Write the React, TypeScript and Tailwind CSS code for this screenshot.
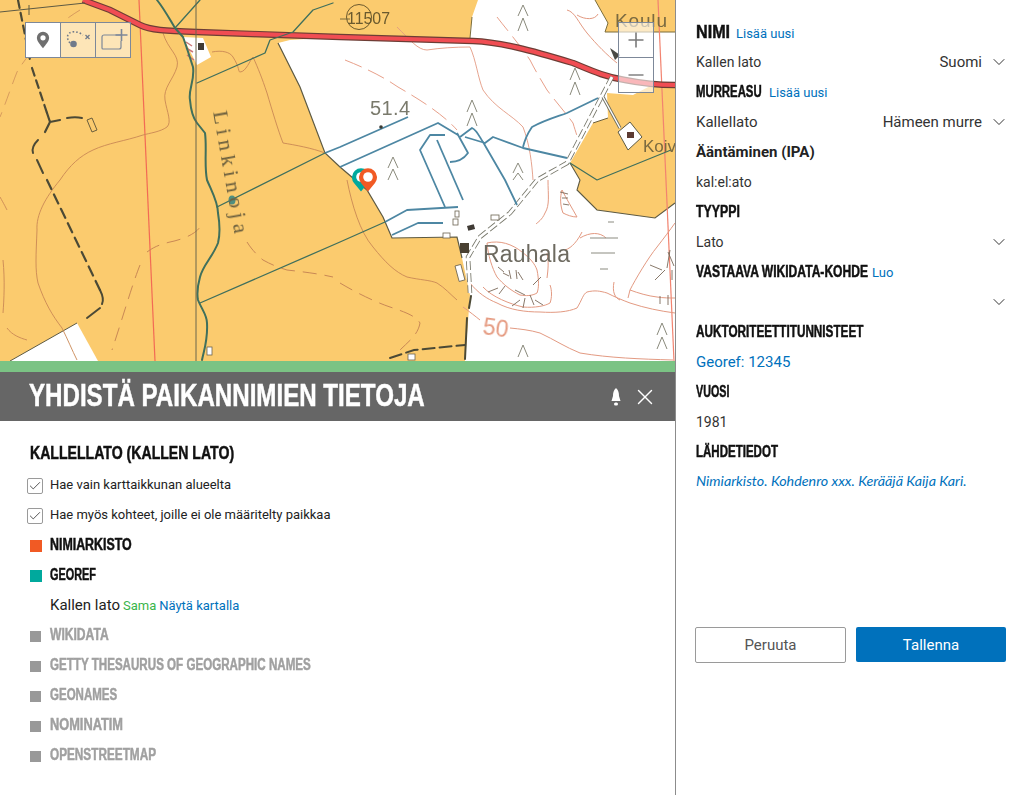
import React from 'react';
import { ChevronDown, X, Check } from 'lucide-react';

const pins = ['#00a99d', '#f15a24'];

function TopoMap() {
  return (
    <svg viewBox="0 0 675 361" className="block w-[675px] h-[361px]">
      <defs>
        <filter id="soft"><feGaussianBlur stdDeviation="0.45" /></filter>
      </defs>
      <g filter="url(#soft)" fill="none">
        <rect width="675" height="361" fill="#fbcb6e" />
        {/* open fields */}
        <path d="M278 43L290 40L340 37L470 40V33L472 17L478 0H595L608 23L605 32H675V88L652 85L633 95L607 93L608 118L593 123L570 163L580 180L577 190L597 210L655 218L675 203V361H465L470 295L462 258L457 237L392 238L383 217L367 190L340 167L325 153L300 87Z" fill="#fff" />
        <path d="M10 361L77 323L98 361Z" fill="#fff" />
        <path d="M183 37L203 38L211 57L197 65Z" fill="#fff" />
        <path d="M278 43L300 87L325 153L340 167L367 190L383 217L392 238L457 237L462 258" stroke="#5d5a43" strokeWidth="1.2" />
        <path d="M472 17L470 38M340 19H350" stroke="#7b6d3a" strokeWidth="1" />
        <path d="M595 0L608 23L605 32H675" stroke="#7b6d3a" strokeWidth="1" />
        <path d="M570 163L580 180L577 190L597 210L655 218L675 203" stroke="#5d5a43" strokeWidth="1.100" />
        <path d="M593 123L608 118" stroke="#6b5f3e" strokeWidth="1" />
        <path d="M10 361L77 323" stroke="#5d5a43" strokeWidth="1" />

        {/* red grid lines */}
        <path d="M139 0L155 361" stroke="#f26a55" strokeWidth="1.200" />
        <path d="M658 0L674 361" stroke="#f2836f" strokeWidth="1.200" />

        {/* contours on the yellow */}
        <g stroke="#c98855" strokeWidth="0.900">
          <path d="M163 33C168 50 180 55 177 67C173 80 163 88 165 100C167 112 172 122 167 127C160 132 150 133 143 135C125 141 108 143 93 150C80 156 70 165 60 180C45 198 36 215 37 230C36 255 35 270 38 283C45 303 52 315 62 328C68 340 72 350 77 360" />
          <path d="M212 52C222 50 230 52 233 57C240 68 238 72 240 72C246 72 250 60 253 57C258 68 262 78 267 93C272 110 278 130 283 143C295 145 312 148 325 153" />
          <path d="M347 180C352 205 360 232 373 247C385 262 395 272 407 277C420 280 430 280 437 283C445 288 450 294 457 300" />
          <path d="M397 27C410 40 418 50 427 50C440 48 455 47 470 47C476 60 478 78 483 90C495 108 512 115 523 127C530 145 532 165 533 180" stroke="#e39a82" />
          <path d="M0 197C4 204 6 208 7 210M3 260C5 280 4 300 3 313M7 328C12 335 20 338 27 340" />
        </g>
        <g stroke="#c98855" strokeWidth="1" strokeDasharray="14 8">
          <path d="M80 10C55 25 30 50 17 72C10 90 5 105 0 117" opacity=".7" />
          <path d="M247 242C252 250 258 256 263 260C272 265 280 268 287 270C305 272 320 274 333 277" />
          <path d="M140 265C132 285 122 320 112 350" />
          <path d="M147 252C155 246 162 244 170 242C180 240 195 235 200 227" />
          <path d="M340 283C355 292 375 302 390 307C405 312 416 316 420 323C418 335 408 342 400 350" />
        </g>
        <g stroke="#e8a08a" strokeWidth="1" strokeDasharray="18 7">
          <path d="M345 60C365 68 382 76 398 87C410 94 420 100 430 107C440 114 450 122 457 130" />
          <path d="M497 17C507 30 520 45 530 60C535 70 541 80 547 90C556 102 565 112 573 123C575 130 577 135 578 140" />
        </g>
        <g stroke="#e39a82" strokeWidth="1">
          <path d="M510 328C520 329 530 330 540 333C555 340 565 347 580 353C610 358 640 359 673 360" />
          <path d="M470 283C478 293 487 299 497 303C510 310 525 312 540 312C555 313 568 312 577 308C582 300 583 294 587 292C595 290 600 291 607 293C615 297 622 300 630 303C645 308 660 311 675 313" />
          <path d="M487 243C500 240 512 244 522 252C530 258 535 264 537 270C539 280 539 288 537 293C532 296 526 296 520 295C510 290 503 284 497 277C492 268 488 255 487 243Z" />
          <path d="M562 190C566 198 572 208 577 217C572 217 567 215 563 213C560 205 560 197 562 190Z" />
          <path d="M630 290C635 280 648 258 657 247C664 238 670 230 675 223M630 290C638 293 648 296 657 297C663 298 670 298 675 298" />
          <path d="M630 290L628 298M483 287C492 297 510 304 523 307C535 308 545 306 550 303C552 298 552 290 550 285M547 253C549 262 548 270 547 278" />
          <path d="M463 307C470 312 475 316 480 320M548 180C548 195 550 205 545 213C542 220 538 222 536 224" />
          <path d="M580 238C590 232 600 232 606 238M614 282C612 292 615 298 620 300M565 250C572 248 578 240 582 232" />
          <path d="M567 10C575 12 578 22 587 33C597 45 607 55 617 63M577 15C585 20 595 20 598 14" />
        </g>

        {/* tracks */}
        <g stroke="#4c4a36" strokeWidth="2" strokeLinecap="round">
          <path d="M18 0L30 60M32 68L47 113" strokeDasharray="8 5" strokeWidth="2.200" />
          <path d="M50 122L45 132M50 122L60 120M50 122L47 113" strokeWidth="2.200" />
          <path d="M67 118C72 117 78 117 82 118" strokeWidth="2" />
          <path d="M38 140C33 145 32 150 33 153M37 160L43 173" strokeWidth="2" />
          <path d="M47 180L100 290" strokeDasharray="10 6" strokeWidth="2.200" />
          <path d="M100 290C103 296 104 300 102 304M100 308L87 318" strokeWidth="2" />
          <path d="M465 359L467 318M469 308L471 296" strokeWidth="2" />
          <path d="M390 358L414 350L465 345" strokeDasharray="12 5" />
        </g>
        <path d="M87 120L92 118L97 130L92 132Z" stroke="#6b5f3e" strokeWidth="1" />

        {/* main road */}
        <path d="M83 0L110 10L140 25C150 30 165 31 197 32L340 37L473 41C500 42 530 50 573 63C590 70 605 77 625 80C640 83 655 85 675 85" stroke="#6d3d35" strokeWidth="6.500" />
        <path d="M83 0L110 10L140 25C150 30 165 31 197 32L340 37L473 41C500 42 530 50 573 63C590 70 605 77 625 80C640 83 655 85 675 85" stroke="#f04e52" strokeWidth="4.200" />

        {/* side road + houses */}
        <path d="M612 77L567 163L537 180L510 213L480 237L468 257L470 293" stroke="#77776a" strokeWidth="4.500" strokeDasharray="9 3" />
        <path d="M612 77L567 163L537 180L510 213L480 237L468 257L470 293" stroke="#fff" strokeWidth="2.800" />
        <path d="M603 97L620 128" stroke="#6e6e60" strokeWidth="3.200" />
        <path d="M603 97L620 128" stroke="#fff" strokeWidth="1.400" />
        <path d="M618 132L630 122L642 137L628 150Z" fill="#fff" stroke="#5d5a43" strokeWidth="1" />
        <rect x="627" y="132" width="7" height="6" fill="#5b3a32" />
        <rect x="198" y="43" width="6" height="7" fill="#3f3a36" />
        <path d="M186 42L192 46M186 48L193 52M187 55L194 60" stroke="#c77" strokeWidth="1.500" />
        <rect x="460" y="243" width="9" height="10" fill="#4a4032" />
        <rect x="467" y="226" width="7" height="5" fill="#3f3a36" transform="rotate(-15 467 226)" />

        {/* ditches blue */}
        <g stroke="#4d87a3" strokeWidth="1.800" strokeLinejoin="round">
          <path d="M325 153L340 147L408 117" />
          <path d="M340 167L438 123L458 135" />
          <path d="M445 135H430L420 150L445 207" />
          <path d="M437 140L463 200" />
          <path d="M460 137L472 128C477 130 480 138 483 142L505 180L517 205" />
          <path d="M465 137L485 143L493 137L523 148L567 158" />
          <path d="M523 147C526 135 530 130 532 127C545 120 556 117 567 113L598 98" />
          <path d="M457 133L468 153C463 160 455 162 450 162" />
          <path d="M385 222L407 210L458 207" />
          <path d="M392 235L418 223L443 223" />
        </g>

        {/* stream + ditches green */}
        <g stroke="#3f6f5c" strokeLinejoin="round" strokeLinecap="round">
          <path d="M157 0C165 10 170 20 175 28L183 37C187 48 190 58 193 67C195 80 188 90 190 100C191 112 193 118 197 123L205 133C207 148 204 165 207 180C212 192 218 202 218 213C220 225 220 235 218 243C212 258 203 265 200 277C197 288 197 295 198 300C202 310 207 315 207 323C208 340 204 350 202 360" strokeWidth="2" />
          <path d="M175 28L200 0" strokeWidth="1.300" />
          <path d="M197 83L265 53L270 40L293 32L313 10L333 3" strokeWidth="1.300" />
          <path d="M217 207L325 153" strokeWidth="1.300" />
          <path d="M200 303L340 242L385 222" strokeWidth="1.300" />
          <path d="M570 163L597 180L671 150" strokeWidth="1.200" />
        </g>
        <path d="M196 0V361" stroke="#6a664c" strokeWidth="1" />
        <path d="M0 12L85 3M29 5V15" stroke="#5d5a43" strokeWidth="1" />
        <ellipse cx="232" cy="200" rx="3.500" ry="4.500" fill="#4f8f80" />

        {/* small buildings */}
        <g stroke="#6b6350" fill="#fff" strokeWidth="0.800">
          <rect x="455" y="211" width="4" height="6" />
          <rect x="491" y="215" width="8" height="5" />
          <rect x="453" y="219" width="5" height="6" />
          <rect x="443" y="233" width="7" height="5" />
          <rect x="455" y="266" width="6" height="16" transform="rotate(-15 455 266)" />
          <rect x="408" y="354" width="7" height="6" />
          <rect x="207" y="347" width="5" height="8" />
        </g>

        {/* tree marks */}
        <g stroke="#8a8a7c" strokeWidth="1">
          <path d="M523 5l-5 11M523 5l5 11M523 18l-5 13M523 18l5 13" />
          <path d="M472 100l-5 12M472 100l5 12M472 113l-5 13M472 113l5 13" />
          <path d="M575 68l-5 12M575 68l5 12M575 82l-5 13M575 82l5 13" />
          <path d="M393 157l-5 11M393 157l5 11M393 169l-5 11M393 169l5 11" />
          <path d="M518 163l-5 10M518 163l5 10M518 173l-5 7M518 173l5 7" />
          <path d="M662 323l-5 12M662 323l5 12M662 337l-5 12M662 337l5 12" />
          <path d="M523 345l-5 12M523 345l5 12" />
        </g>
        <g stroke="#7a6a5a" strokeWidth="0.900">
          <path d="M498 267l6 5M503 273l6 3M509 270l2 9M516 270l1 9M523 280l-5 -8M515 290l10 5M505 286l-6 8M498 288l-10 4M530 295l4 10M525 298l-2 10M533 285l8 -8M520 300l-8 6M535 300l8 5" />
          <path d="M650 265l12 5M655 280l10-10M670 250l-3 18M672 280l0-10M668 295v10M660 296v8M668 252l6 14" />
          <path d="M560 192l8 2M562 198l6 0M563 204l6 1" />
        </g>
        <circle cx="381" cy="127" r="1.800" fill="#3b3a33" />
        <path d="M590 238H618M591 253H615M608 222h6M600 269h8" stroke="#8b8b80" strokeWidth="1" />
        <path d="M610 48L615 60L620 55Z" fill="#4a4a44" />
      </g>

      {/* map labels */}
      <g filter="url(#soft)" fontFamily="'Liberation Sans', sans-serif">
        <circle cx="359" cy="17" r="12.500" fill="none" stroke="#6b5a2e" strokeWidth="1" />
        <text x="347" y="24" fontSize="17" fill="#6b5a2e" textLength="43" lengthAdjust="spacingAndGlyphs">11507</text>
        <text x="370" y="115" fontSize="20" fill="#7a7a6c" textLength="40">51.4</text>
        <text x="483" y="262" fontSize="23" fill="#6d6a60" textLength="87">Rauhala</text>
        <text x="482" y="334" fontSize="23" fill="#e59a80" transform="rotate(8 482 334)">50</text>
        <text x="615" y="27" fontSize="19" fill="#7a6a40" textLength="52">Koulu</text>
        <text x="643" y="152" fontSize="17" fill="#7a6a40">Koiv</text>
        <text x="0" y="0" fontSize="22" fontFamily="'Liberation Serif', serif" fill="#6b5f3e" textLength="124" transform="translate(213 112) rotate(80)">Linkinoja</text>
      </g>

      {/* pins */}
      {[361, 368].map((x, i) => (
        <g key={x}>
          <path d={`M${x} 191.500L${x - 7} 183a9 9 0 1 1 14 0Z`} fill={pins[i]} />
          <circle cx={x} cy="177" r="4.800" fill="#fff" />
        </g>
      ))}
    </svg>
  );
}

function Toolbar() {
  return (
    <div className="absolute left-[25px] top-[22px] flex h-[36px] border border-[#7d8899]">
      <div className="flex w-[35px] items-center justify-center bg-white border-r border-[#7d8899]">
        <svg width="14" height="18" viewBox="0 0 16 20">
          <path fillRule="evenodd" d="M8 0.500a7 7 0 0 1 7 7c0 4-4 8-7 12c-3-4-7-8-7-12a7 7 0 0 1 7-7Zm0 4a3 3 0 1 0 0 6a3 3 0 0 0 0-6Z" fill="#6f6f6f" />
        </svg>
      </div>
      <div className="flex w-[35px] items-center justify-center bg-white/50 border-r border-[#7d8899]">
        <svg width="26" height="20" viewBox="0 0 26 20" fill="none" stroke="#707a8a">
          <path d="M5 13C1 8 2 3 7 2C11 1 15 3 18 5" strokeWidth="1.600" strokeDasharray="1.600 2" />
          <circle cx="8.500" cy="14" r="3.300" fill="#707a8a" stroke="none" />
          <path d="M20.500 5l4 4M24.500 5l-4 4" strokeWidth="1.300" />
        </svg>
      </div>
      <div className="flex w-[34px] items-center justify-center bg-white/50">
        <svg width="29" height="22" viewBox="0 0 29 22" fill="none" stroke="#7d8899">
          <path d="M22 6H5a2 2 0 0 0-2 2V19a1 1 0 0 0 1 1h16a2 2 0 0 0 2-2V12" strokeWidth="1.200" />
          <path d="M22.500 0v12M16.500 6h12" strokeWidth="1.600" />
        </svg>
      </div>
    </div>
  );
}

function ZoomControl() {
  return (
    <div className="absolute left-[618px] top-[22px] w-[36px] h-[71px] border border-[#7d8899] bg-white/60 flex flex-col">
      <div className="flex-1 border-b border-[#7d8899] flex items-center justify-center">
        <svg width="18" height="18" viewBox="0 0 18 18" stroke="#7a7a7a" strokeWidth="1.600"><path d="M9 1.500v15M1.500 9h15" /></svg>
      </div>
      <div className="flex-1 flex items-center justify-center">
        <svg width="18" height="4" viewBox="0 0 18 4" stroke="#8a8a8a" strokeWidth="1.600"><path d="M1.500 2h15" /></svg>
      </div>
    </div>
  );
}

// the reference headline face is a heavy condensed one, no such font here so Arial bold gets squeezed
function Heading({ label, width, squeeze, className = '' }: { label: string; width: string; squeeze: string; className?: string }) {
  return (
    <span className={`inline-block ${width} ${className}`}>
      <span className={`inline-block origin-left whitespace-nowrap uppercase font-bold font-['Liberation_Sans',sans-serif] [-webkit-text-stroke:0.5px_currentColor] ${squeeze}`}>{label}</span>
    </span>
  );
}

function CheckRow({ label }: { label: string }) {
  return (
    <label className="flex items-center h-[30px]">
      <span className="ml-[27px] flex w-[16px] h-[16px] mt-[1px] items-center justify-center rounded-[2px] border border-[#9a9a9a] bg-white">
        <Check size={14} strokeWidth={1.300} className="text-[#222]" />
      </span>
      <span className="ml-[7px] text-[13px] text-[#222] -mt-[1px]">{label}</span>
    </label>
  );
}

function Source({ label, color, width, squeeze, muted }: { label: string; color: string; width: string; squeeze: string; muted?: boolean }) {
  return (
    <div className="flex items-center h-[30px] pl-[30px]">
      <span className={`mt-[2px] ${color} ${muted ? 'w-[11px] h-[11px] mr-[9px]' : 'w-[12px] h-[12px] mr-[8px]'}`} />
      <Heading label={label} width={width} squeeze={squeeze} className={`text-[16px] -mt-[1px] ${muted ? 'text-[#a0a0a0]' : 'text-[#111]'}`} />
    </div>
  );
}

function FieldHeading({ label, width, squeeze, link, size = 'text-[16px]' }: { label: string; width: string; squeeze: string; link?: string; size?: string }) {
  return (
    <div className="flex items-baseline h-[30px] leading-[30px]">
      <Heading label={label} width={width} squeeze={squeeze} className={`${size} text-[#111]`} />
      {link && <a className="ml-[4px] text-[13px] text-[#0071bc]">{link}</a>}
    </div>
  );
}

function SelectRow({ value, option }: { value?: string; option?: string }) {
  return (
    <div className="flex items-center h-[30px] text-[14px] text-[#333]">
      <span>{value}</span>
      <span className="ml-auto mr-[7px] text-[15px]">{option}</span>
      <ChevronDown size={20} strokeWidth={1.100} className="text-[#222] mr-[-3px]" />
    </div>
  );
}

function TextRow({ children, className = 'text-[14px] text-[#333]' }: { children: React.ReactNode; className?: string }) {
  return <div className={`flex items-center h-[30px] ${className}`}>{children}</div>;
}

export default function App() {
  return (
    <div className="flex w-[1024px] h-[795px] overflow-hidden bg-white font-['Roboto',sans-serif]">
      <div className="w-[675px] flex flex-col shrink-0">
        <div className="relative h-[361px]">
          <TopoMap />
          <Toolbar />
          <ZoomControl />
        </div>
        <div className="h-[11px] bg-[#7bc384]" />
        <div className="h-[49px] bg-[#666666] flex items-center pl-[29px] pr-[17px] text-white">
          <Heading label="Yhdistä paikannimien tietoja" width="w-[395px]" squeeze="[transform:scaleX(.778)]" className="text-[31px]" />
          <svg width="10" height="18" viewBox="0 0 10 18" className="ml-auto mr-[11px]" fill="#fff">
            <path d="M5 0C7.500 2 8 5 8 8L9.500 13H0.500L2 8C2 5 2.500 2 5 0Z" />
            <rect x="3" y="14.500" width="4" height="3" rx="1.500" />
          </svg>
          <X size={26} strokeWidth={1.300} />
        </div>
        <div className="flex-1 pt-[17px]">
          <div className="pl-[30px] h-[30px] leading-[30px]">
            <Heading label="Kallellato (Kallen lato)" width="w-[204px]" squeeze="[transform:scaleX(.742)]" className="text-[19px] text-[#111]" />
          </div>
          <div className="mt-[2px]">
            <CheckRow label="Hae vain karttaikkunan alueelta" />
            <CheckRow label="Hae myös kohteet, joille ei ole määritelty paikkaa" />
          </div>
          <Source label="Nimiarkisto" color="bg-[#f15a24]" width="w-[82px]" squeeze="[transform:scaleX(.774)]" />
          <Source label="Georef" color="bg-[#00a99d]" width="w-[46px]" squeeze="[transform:scaleX(.68)]" />
          <div className="flex items-baseline h-[30px] leading-[30px] pl-[50px] text-[15px] text-[#222]">
            Kallen lato
            <a className="ml-[3px] text-[13px] text-[#39b54a]">Sama</a>
            <a className="ml-[3px] text-[13px] text-[#0071bc]">Näytä kartalla</a>
          </div>
          <Source label="Wikidata" color="bg-[#999999]" width="w-[59px]" squeeze="[transform:scaleX(.756)]" muted />
          <Source label="Getty Thesaurus of Geographic Names" color="bg-[#999999]" width="w-[261px]" squeeze="[transform:scaleX(.725)]" muted />
          <Source label="Geonames" color="bg-[#999999]" width="w-[67px]" squeeze="[transform:scaleX(.72)]" muted />
          <Source label="Nominatim" color="bg-[#999999]" width="w-[73px]" squeeze="[transform:scaleX(.8)]" muted />
          <Source label="OpenStreetMap" color="bg-[#999999]" width="w-[106px]" squeeze="[transform:scaleX(.736)]" muted />
        </div>
      </div>
      <aside className="flex-1 border-l border-[#8c8c8c] pl-[20px] pr-[18px] pt-[17px] flex flex-col">
        <FieldHeading label="Nimi" width="w-[36px]" squeeze="[transform:scaleX(.85)]" size="text-[19px]" link="Lisää uusi" />
        <SelectRow value="Kallen lato" option="Suomi" />
        <FieldHeading label="Murreasu" width="w-[69px]" squeeze="[transform:scaleX(.71)]" link="Lisää uusi" />
        <div className="flex items-center h-[30px] text-[15px] text-[#333]">
          <span>Kallellato</span>
          <span className="ml-auto mr-[7px]">Hämeen murre</span>
          <ChevronDown size={20} strokeWidth={1.100} className="text-[#222] mr-[-3px]" />
        </div>
        <div className="flex items-center h-[30px] text-[15px] font-bold text-[#222]">Ääntäminen (IPA)</div>
        <TextRow>kal:el:ato</TextRow>
        <FieldHeading label="Tyyppi" width="w-[42px]" squeeze="[transform:scaleX(.77)]" />
        <SelectRow value="Lato" />
        <FieldHeading label="Vastaava Wikidata-kohde" width="w-[172px]" squeeze="[transform:scaleX(.755)]" link="Luo" />
        <SelectRow />
        <FieldHeading label="Auktoriteettitunnisteet" width="w-[168px]" squeeze="[transform:scaleX(.734)]" />
        <TextRow className="text-[15px] text-[#0071bc]">Georef: 12345</TextRow>
        <FieldHeading label="Vuosi" width="w-[37px]" squeeze="[transform:scaleX(.67)]" />
        <TextRow>1981</TextRow>
        <FieldHeading label="Lähdetiedot" width="w-[82px]" squeeze="[transform:scaleX(.72)]" />
        <TextRow className="text-[#0071bc] italic font-['Lato',sans-serif] text-[14.3px] pb-[2px]">Nimiarkisto. Kohdenro xxx. Kerääjä Kaija Kari.</TextRow>
        <div className="mt-[130px] flex gap-[10px] -ml-[1px]">
          <button className="w-[151px] h-[36px] rounded-[2px] border border-[#9a9a9a] bg-white text-[15px] text-[#555]">Peruuta</button>
          <button className="w-[150px] h-[35px] pt-[1px] rounded-[2px] bg-[#0071bc] text-[15px] text-white">Tallenna</button>
        </div>
      </aside>
    </div>
  );
}
